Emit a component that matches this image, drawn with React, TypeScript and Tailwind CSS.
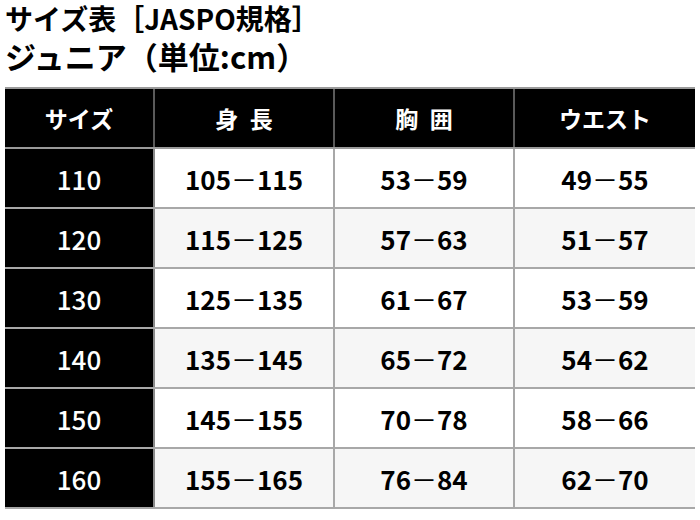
const rows = [
  { size: "110", height: ["105", "115"], chest: ["53", "59"], waist: ["49", "55"] },
  { size: "120", height: ["115", "125"], chest: ["57", "63"], waist: ["51", "57"] },
  { size: "130", height: ["125", "135"], chest: ["61", "67"], waist: ["53", "59"] },
  { size: "140", height: ["135", "145"], chest: ["65", "72"], waist: ["54", "62"] },
  { size: "150", height: ["145", "155"], chest: ["70", "78"], waist: ["58", "66"] },
  { size: "160", height: ["155", "165"], chest: ["76", "84"], waist: ["62", "70"] },
];

const font = { fontFamily: '"Noto Sans CJK JP", "Noto Sans", sans-serif' };

function Range({ v }: { v: string[] }) {
  return (
    <span>
      {v[0]}
      <span className="font-normal">－</span>
      {v[1]}
    </span>
  );
}

export default function App() {
  return (
    <div className="w-[700px] h-[520px] bg-white px-[5px] text-black" style={font}>
      <h1 className="leading-[36px] text-[28px] font-bold whitespace-nowrap">
        サイズ表［JASPO規格］
      </h1>
      <h2 className="leading-[40px] text-[31px] font-bold whitespace-nowrap">
        ジュニア（単位:cm）
      </h2>

      <div className="mt-[11px] w-[690px] border-t-2 border-[#9a9a9a]">
        {/* header */}
        <div className="grid grid-cols-[150px_180px_180px_180px] h-[60px] border-b-2 border-[#9a9a9a] bg-black text-white text-[23px] font-bold">
          <div className="flex items-center justify-center border-r-2 border-[#5a5a5a]">サイズ</div>
          <div className="flex items-center justify-center border-r-2 border-[#5a5a5a]">身&ensp;長</div>
          <div className="flex items-center justify-center border-r-2 border-[#5a5a5a]">胸&ensp;囲</div>
          <div className="flex items-center justify-center">ウエスト</div>
        </div>

        {rows.map((r, i) => (
          <div
            key={r.size}
            className={
              "grid grid-cols-[150px_180px_180px_180px] h-[60px] border-b-2 border-[#a8a8a8] text-[26px] " +
              (i % 2 === 1 ? "bg-[#f6f6f6]" : "bg-white")
            }
          >
            <div className="flex items-center justify-center bg-black text-white font-medium border-r-2 border-[#8a8a8a]">
              {r.size}
            </div>
            <div className="flex items-center justify-center font-bold border-r-2 border-[#a8a8a8]">
              <Range v={r.height} />
            </div>
            <div className="flex items-center justify-center font-bold border-r-2 border-[#a8a8a8]">
              <Range v={r.chest} />
            </div>
            <div className="flex items-center justify-center font-bold">
              <Range v={r.waist} />
            </div>
          </div>
        ))}
      </div>
    </div>
  );
}
